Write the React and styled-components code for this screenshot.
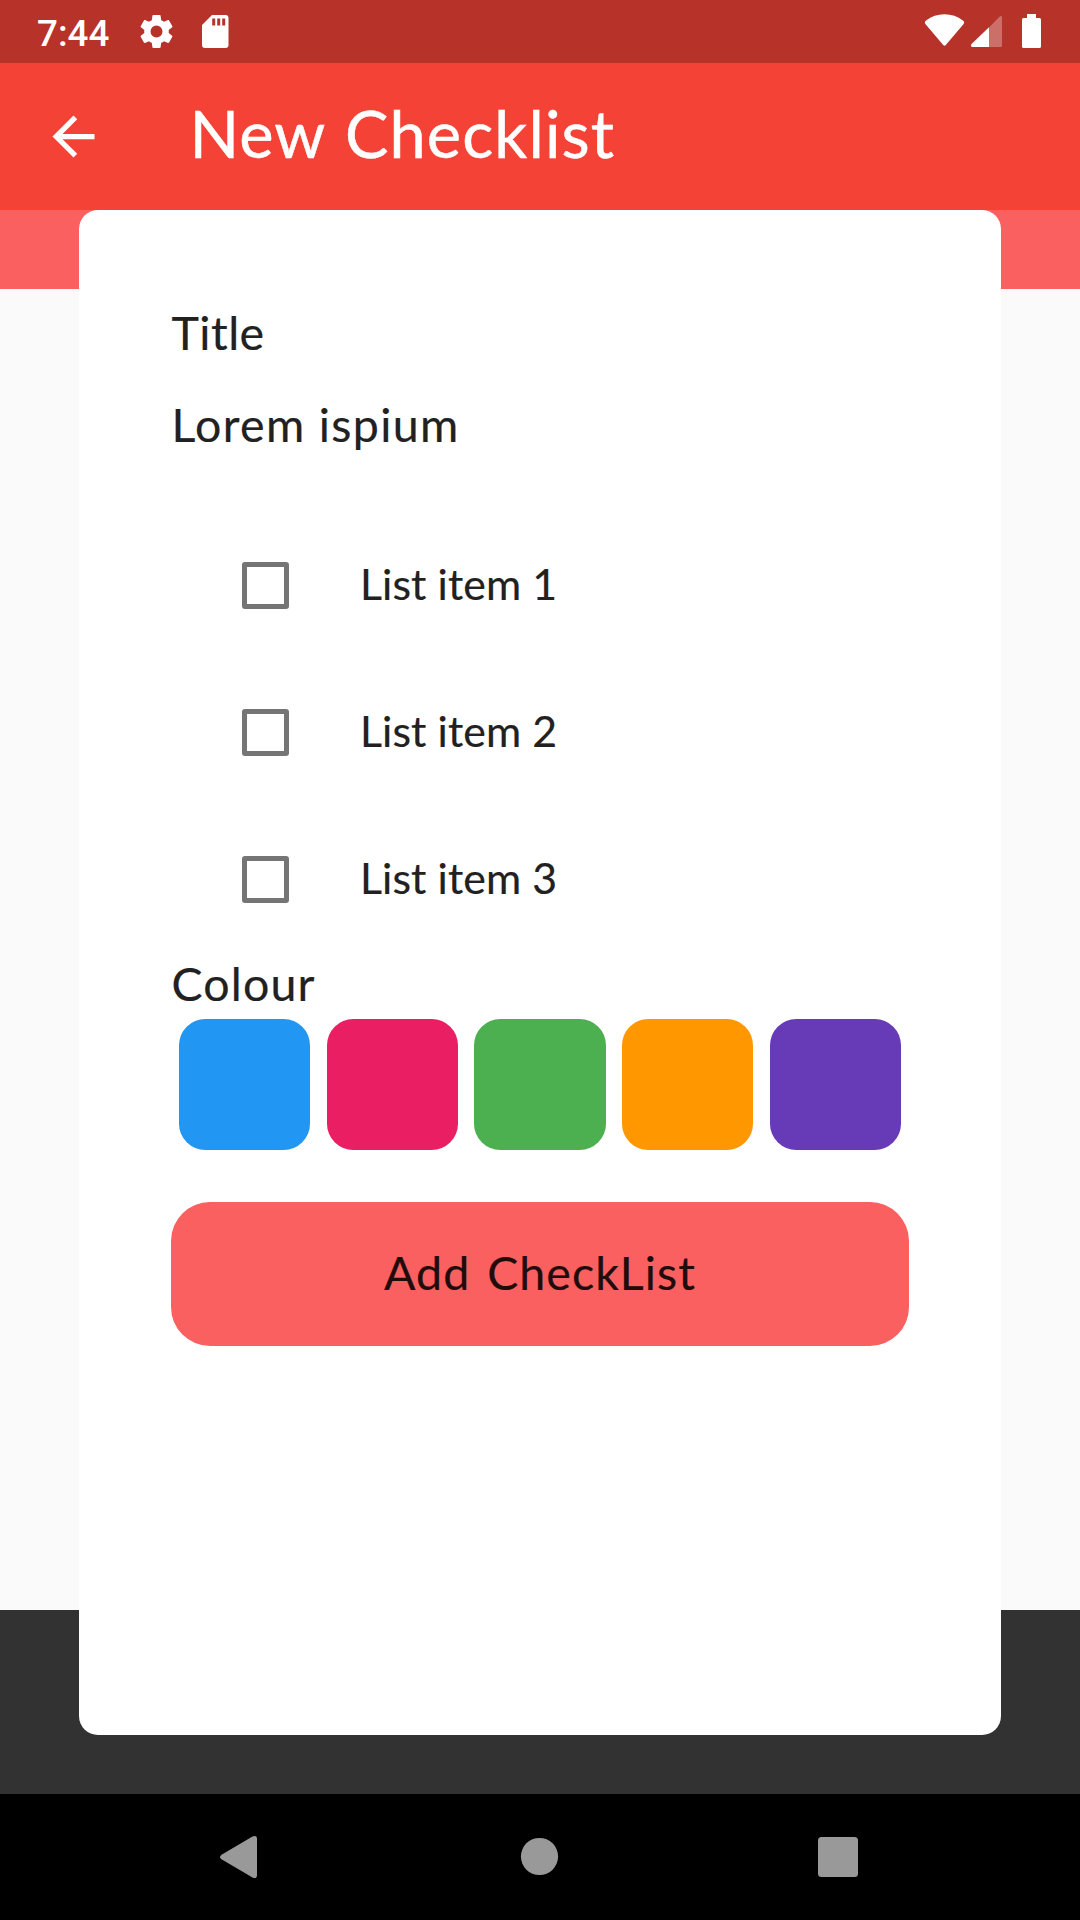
import React from "react";
import styled, { createGlobalStyle } from "styled-components";

const GlobalStyle = createGlobalStyle`
  * { box-sizing: border-box; }
  body { margin: 0; background: #000; }
  button { border: 0; margin: 0; padding: 0; background: none; font: inherit; color: inherit; }
`;

const Screen = styled.div`
  display: flex;
  flex-direction: column;
  width: 1080px;
  height: 1920px;
  overflow: hidden;
  font-family: Lato, "Open Sans", sans-serif;
  color: #212121;
`;

const StatusBar = styled.header`
  display: flex;
  justify-content: space-between;
  height: 63px;
  padding: 0 39px 0 37px;
  background: #b73229;
  color: #fff;
`;

const StatusGroup = styled.div`
  display: flex;
  align-items: center;
  gap: 24.5px;
`;

const Clock = styled.span`
  width: 74.5px;
  margin-top: 3px;
  font: 500 36.75px/43px Roboto, sans-serif;
`;

const Glyph = styled.svg`
  display: block;
  flex: none;
  width: ${(p) => p.$w}px;
  height: ${(p) => p.$h}px;
  fill: ${(p) => p.$fill || "#fff"};
`;

const AppBar = styled.div`
  display: flex;
  align-items: center;
  height: 147px;
  padding-left: 42px;
  background: #f44336;
  color: #fff;
`;

const BackButton = styled.button`
  width: 63px;
  height: 63px;
`;

const PageTitle = styled.h1`
  margin: 0 0 0 84.5px;
  padding-bottom: 7px;
  font-size: 65px;
  font-weight: 400;
  line-height: 80px;
  letter-spacing: 1.1px;
  word-spacing: 2px;
  -webkit-text-stroke: 0.5px currentColor;
`;

const Body = styled.main`
  display: grid;
  grid-template: 1584px / 1080px;
`;

const Backdrop = styled.div`
  grid-area: 1 / 1;
  display: grid;
  grid-template-rows: 79px 1fr 184px;
`;

const Band = styled.div`
  background: ${(p) => p.$color};
`;

const Card = styled.section`
  grid-area: 1 / 1;
  justify-self: center;
  display: flex;
  flex-direction: column;
  width: 922px;
  height: 1525px;
  padding: 92px 92px 0;
  border-radius: 19px;
  background: #fff;
`;

const Label = styled.div`
  height: 60px;
  margin-top: ${(p) => p.$top || 0}px;
  padding-left: 0.5px;
  font-size: 46.5px;
  line-height: 60px;
  letter-spacing: ${(p) => p.$spacing || 0}px;
  -webkit-text-stroke: 0.2px currentColor;
`;

const Items = styled.ul`
  margin: 58px 0 0;
  padding: 0;
  list-style: none;
`;

const Item = styled.li`
  display: flex;
  align-items: center;
  height: 147px;
  padding-left: 71px;
`;

const Checkbox = styled.span`
  width: 47px;
  height: 47px;
  border: 5px solid #757575;
  border-radius: 3px;
`;

const ItemText = styled.span`
  margin-left: 71px;
  padding-bottom: 3px;
  font-size: 42.8px;
  line-height: 54px;
  letter-spacing: 0.1px;
  -webkit-text-stroke: 0.2px currentColor;
`;

const Swatches = styled.div`
  display: flex;
  justify-content: space-around;
  margin-top: 6px;
`;

const Swatch = styled.button`
  width: 131.25px;
  height: 131.25px;
  border-radius: 26.25px;
  background: ${(p) => p.$color};
`;

const AddButton = styled.button`
  height: 144px;
  margin-top: 52px;
  padding-bottom: 5px;
  border-radius: 39px;
  background: #fb6060;
  color: #210c0c;
  font-size: 46.5px;
  letter-spacing: 1.05px;
  word-spacing: 4px;
  -webkit-text-stroke: 0.2px currentColor;
`;

const NavBar = styled.nav`
  display: grid;
  grid-template-columns: repeat(3, 300px);
  justify-content: center;
  place-items: center;
  height: 126px;
  background: #000;
`;

const ITEMS = ["List item 1", "List item 2", "List item 3"];
const COLOURS = ["#2196f3", "#e91e63", "#4caf50", "#ff9800", "#673ab7"];

export default function App() {
  return (
    <>
      <GlobalStyle />
      <Screen>
        <StatusBar>
          <StatusGroup>
            <Clock>7:44</Clock>
            <Glyph viewBox="0 0 24 24" $w={41} $h={41}>
              <path d="M19.14 12.94c.04-.3.06-.61.06-.94 0-.32-.02-.64-.07-.94l2.03-1.58c.18-.14.23-.41.12-.61l-1.92-3.32c-.12-.22-.37-.29-.59-.22l-2.39.96c-.5-.38-1.03-.7-1.62-.94l-.36-2.54c-.04-.24-.24-.41-.48-.41h-3.84c-.24 0-.43.17-.47.41l-.36 2.54c-.59.24-1.13.57-1.62.94l-2.39-.96c-.22-.08-.47 0-.59.22L2.74 8.87c-.12.21-.08.47.12.61l2.03 1.58c-.05.3-.09.63-.09.94s.02.64.07.94l-2.03 1.58c-.18.14-.23.41-.12.61l1.92 3.32c.12.22.37.29.59.22l2.39-.96c.5.38 1.03.7 1.62.94l.36 2.54c.05.24.24.41.48.41h3.84c.24 0 .44-.17.47-.41l.36-2.54c.59-.24 1.13-.56 1.62-.94l2.39.96c.22.08.47 0 .59-.22l1.92-3.32c.12-.22.07-.47-.12-.61l-2.01-1.58zM12 15.5a3.5 3.5 0 1 1 0-7 3.5 3.5 0 0 1 0 7z" />
            </Glyph>
            <Glyph viewBox="0 0 27 33" $w={27} $h={33}>
              <path
                fillRule="evenodd"
                d="M10 0h13.500a3 3 0 0 1 3 3v27a3 3 0 0 1-3 3h-20.500a3 3 0 0 1-3-3V10zM10.200 3.500v7h3v-7zM15.200 3.500v7h3v-7zM20.200 3.500v7h3v-7z"
              />
            </Glyph>
          </StatusGroup>
          <Glyph viewBox="924 0 117 63" $w={117} $h={63}>
            <path d="M925.600 24.300q-1.800-2.200.5-3.700 8-6.400 18.400-6.400t18.400 6.400q2.300 1.500.5 3.700L946 44.800q-1.500 1.700-3 0z" />
            <path d="M1002 17.500v28a1.500 1.500 0 0 1-1.500 1.500H989V27.500l10.500-10.700q2.500-1.800 2.500.7z" opacity=".3" />
            <path d="M989 27.200V47h-16.500q-2.500-.5-1-3z" />
            <path d="M1027 14h9v4h3.500a1.500 1.500 0 0 1 1.500 1.500v27a1.500 1.500 0 0 1-1.500 1.500h-16a1.500 1.500 0 0 1-1.500-1.500v-27a1.500 1.500 0 0 1 1.500-1.500h3.500z" />
          </Glyph>
        </StatusBar>
        <AppBar>
          <BackButton aria-label="Back">
            <Glyph viewBox="0 0 24 24" $w={63} $h={63}>
              <path d="M20 11H7.830l5.590-5.590L12 4l-8 8 8 8 1.410-1.410L7.830 13H20v-2z" />
            </Glyph>
          </BackButton>
          <PageTitle>New Checklist</PageTitle>
        </AppBar>
        <Body>
          <Backdrop>
            <Band $color="#fb6060" />
            <Band $color="#fafafa" />
            <Band $color="#323232" />
          </Backdrop>
          <Card>
            <Label $spacing={0.5}>Title</Label>
            <Label $top={32} $spacing={1.35}>Lorem ispium</Label>
            <Items>
              {ITEMS.map((text) => (
                <Item key={text}>
                  <Checkbox />
                  <ItemText>{text}</ItemText>
                </Item>
              ))}
            </Items>
            <Label $spacing={1.15}>Colour</Label>
            <Swatches>
              {COLOURS.map((c) => (
                <Swatch key={c} $color={c} aria-label={c} />
              ))}
            </Swatches>
            <AddButton>Add CheckList</AddButton>
          </Card>
        </Body>
        <NavBar>
          <Glyph viewBox="-30 -30 60 60" $w={60} $h={60} $fill="#999">
            <path d="M-18.500-2.300 12.500-20.500q4.500-2 4.500 2.500v36q0 4.500-4.500 2.500L-18.500 2.300q-3-2.300 0-4.600z" />
          </Glyph>
          <Glyph viewBox="-30 -30 60 60" $w={60} $h={60} $fill="#999">
            <circle cx="-0.500" cy="-0.500" r="18.600" />
          </Glyph>
          <Glyph viewBox="-30 -30 60 60" $w={60} $h={60} $fill="#999">
            <rect x="-22" y="-20" width="40" height="40" rx="3.500" />
          </Glyph>
        </NavBar>
      </Screen>
    </>
  );
}
